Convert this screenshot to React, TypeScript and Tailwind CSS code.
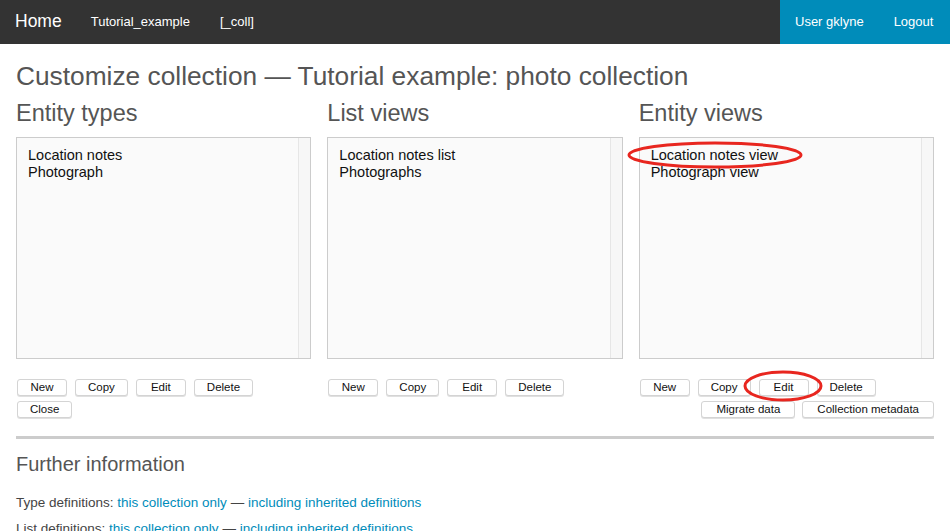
import React from "react";

const font = { fontFamily: '"Liberation Sans", Arial, Helvetica, sans-serif' };

function Btn({ children, wide }: { children: React.ReactNode; wide?: boolean }) {
  return (
    <button
      className={
        wide
          ? "h-[17px] px-[14px] min-w-[50px] bg-white border border-[#d4d4d4] rounded-[3px] shadow-[0_1px_0_rgba(0,0,0,0.12)] text-[11.5px] leading-[15px] text-[#111]"
          : "h-[17px] px-[12px] min-w-[50px] bg-white border border-[#d4d4d4] rounded-[3px] shadow-[0_1px_0_rgba(0,0,0,0.12)] text-[11.5px] leading-[15px] text-[#111]"
      }
    >
      {children}
    </button>
  );
}

function Column({ title, items, children }: { title: string; items: string[]; children?: React.ReactNode }) {
  return (
    <div className="flex flex-col">
      <h2 className="text-[23.5px] leading-[28px] text-[#555] h-[38px]">{title}</h2>
      <div className="h-[222px] border border-[#ccc] bg-[#fafafa] flex">
        <div className="flex-1 pl-[11px] pt-[9px] text-[14.5px] leading-[17px] text-[#111]">
          {items.map((it) => (
            <div key={it}>{it}</div>
          ))}
        </div>
        <div className="w-[12px] border-l border-[#e6e6e6] bg-[#f7f7f7]" />
      </div>
      <div className="mt-[20px]">{children}</div>
    </div>
  );
}

export default function App() {
  return (
    <div className="w-[950px] h-[531px] overflow-hidden bg-white relative" style={font}>
      <nav className="h-[44px] bg-[#333] flex items-stretch text-white">
        <div className="flex items-center pl-[15px]">
          <span className="text-[17.5px] mr-[29px] -mt-[1px]">Home</span>
          <span className="text-[13px] mr-[30px]">Tutorial_example</span>
          <span className="text-[13px]">[_coll]</span>
        </div>
        <div className="ml-auto w-[170px] bg-[#008cba] flex items-center pl-[15px] text-[13px]">
          <span className="mr-[30px]">User gklyne</span>
          <span>Logout</span>
        </div>
      </nav>
      <div className="px-[16px] w-[950px]">
        <h1 className="text-[26.3px] leading-[30px] text-[#555] mt-[17px] h-[38px]">
          Customize collection — Tutorial example: photo collection
        </h1>
        <div className="grid grid-cols-3 gap-x-[16px] w-[918px]">
          <Column title="Entity types" items={["Location notes", "Photograph"]}>
            <div className="flex flex-wrap gap-x-[8px] gap-y-[5px] pl-[1px]">
              <Btn>New</Btn>
              <Btn>Copy</Btn>
              <Btn>Edit</Btn>
              <Btn>Delete</Btn>
              <Btn>Close</Btn>
            </div>
          </Column>
          <Column title="List views" items={["Location notes list", "Photographs"]}>
            <div className="flex flex-wrap gap-x-[8px] gap-y-[5px] pl-[1px]">
              <Btn>New</Btn>
              <Btn>Copy</Btn>
              <Btn>Edit</Btn>
              <Btn>Delete</Btn>
            </div>
          </Column>
          <Column title="Entity views" items={["Location notes view", "Photograph view"]}>
            <div className="flex flex-col gap-y-[5px]">
              <div className="flex gap-x-[8px] pl-[1px]">
                <Btn>New</Btn>
                <Btn>Copy</Btn>
                <Btn>Edit</Btn>
                <Btn>Delete</Btn>
              </div>
              <div className="flex gap-x-[7px] justify-end">
                <Btn wide>Migrate data</Btn>
                <Btn wide>Collection metadata</Btn>
              </div>
            </div>
          </Column>
        </div>
        <div className="mt-[18px] h-[3px] bg-[#ccc] w-[918px]" />
        <h3 className="text-[20px] leading-[24px] text-[#555] mt-[13px]">Further information</h3>
        <p className="text-[13.5px] leading-[16px] text-[#444] mt-[19px]">
          Type definitions: <span className="text-[#008cba]">this collection only</span> —{" "}
          <span className="text-[#008cba]">including inherited definitions</span>
        </p>
        <p className="text-[13.5px] leading-[16px] text-[#444] mt-[10px]">
          List definitions: <span className="text-[#008cba]">this collection only</span> —{" "}
          <span className="text-[#008cba]">including inherited definitions</span>
        </p>
      </div>
      <svg className="absolute left-0 top-0 pointer-events-none" width="950" height="531">
        <ellipse cx="715" cy="155" rx="86" ry="12" fill="none" stroke="#e8261f" strokeWidth="3" />
        <ellipse cx="783" cy="386" rx="38" ry="14" fill="none" stroke="#e8261f" strokeWidth="3" />
      </svg>
    </div>
  );
}
